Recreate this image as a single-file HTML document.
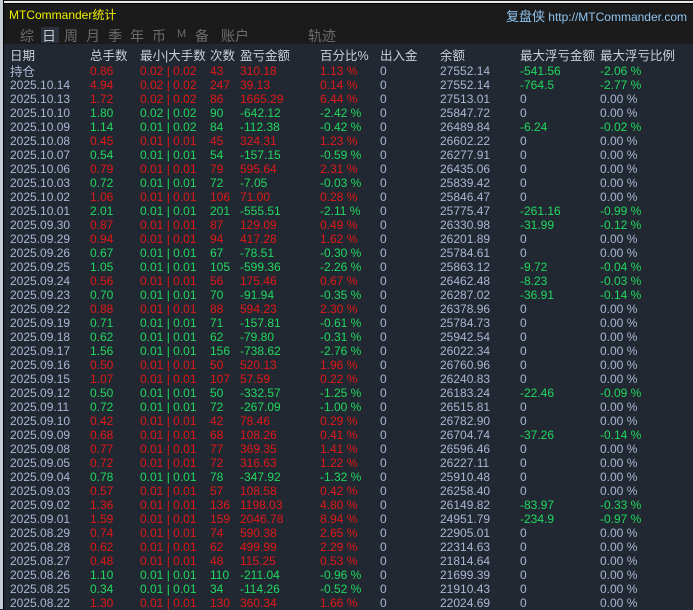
<!DOCTYPE html>
<html><head><meta charset="utf-8"><style>
body{margin:0;width:693px;height:609px;overflow:hidden;background:#222831;position:relative;font-family:"Liberation Sans","Noto Sans CJK SC",sans-serif}
.top{position:absolute;left:0;top:0;width:693px;height:44px;background:#1b1b1b}
.l1{position:absolute;left:0;top:1px;width:693px;height:2px;background:#e8e8e8}
.l2{position:absolute;left:0;top:3px;width:693px;height:1px;background:#000}
.edge{position:absolute;left:0;top:0;width:3px;height:609px;background:#c8ccd4}
.edge2{position:absolute;left:3px;top:0;width:1px;height:609px;background:#000}
.t{position:absolute;white-space:nowrap}
.title{left:9px;top:6px;color:#f0f000;font-size:12px}
.site{right:6px;top:6px;color:#8fc4f0;font-size:12px}
.site b{font-weight:normal;font-size:13px}
.tab{top:26px;color:#6d6d6d;font-size:14px}
.sel{position:absolute;left:41px;top:27px;width:18px;height:16px;background:#2a323e}
.h{top:49px;color:#c9d0dc;font-size:12.5px;line-height:15px}
.r{position:absolute;left:0;width:693px;height:14px;font-size:12px;line-height:14px}
.r span{position:absolute;top:0;white-space:nowrap}
.d{color:#a9b7d4}.R{color:#e01818}.G{color:#20d860}
</style></head><body>
<div class="top"></div><div class="l1"></div><div class="l2"></div>
<div class="edge"></div><div class="edge2"></div>
<div class="t title">MTCommander统计</div>
<div class="t site"><b>复盘侠</b> http://MTCommander.com</div>
<div class="sel"></div>
<div class="t tab" style="left:20px">综</div>
<div class="t tab" style="left:42px;color:#c8c8c8">日</div>
<div class="t tab" style="left:64px">周</div>
<div class="t tab" style="left:86px">月</div>
<div class="t tab" style="left:108px">季</div>
<div class="t tab" style="left:130px">年</div>
<div class="t tab" style="left:152px">币</div>
<div class="t tab" style="left:177px;font-size:11px;top:28px">M</div>
<div class="t tab" style="left:195px">备</div>
<div class="t tab" style="left:221px">账户</div>
<div class="t tab" style="left:308px">轨迹</div>
<div class="t h" style="left:10px">日期</div>
<div class="t h" style="left:90px">总手数</div>
<div class="t h" style="left:140px">最小|大手数</div>
<div class="t h" style="left:210px">次数</div>
<div class="t h" style="left:240px">盈亏金额</div>
<div class="t h" style="left:320px">百分比%</div>
<div class="t h" style="left:380px">出入金</div>
<div class="t h" style="left:440px">余额</div>
<div class="t h" style="left:520px">最大浮亏金额</div>
<div class="t h" style="left:600px">最大浮亏比例</div>
<div id="rows"></div>
<script>
var D=[
["持仓","0.86","0.02 | 0.02","43","310.18","1.13 %","27552.14","-541.56","-2.06 %","R"],
["2025.10.14","4.94","0.02 | 0.02","247","39.13","0.14 %","27552.14","-764.5","-2.77 %","R"],
["2025.10.13","1.72","0.02 | 0.02","86","1665.29","6.44 %","27513.01","","","R"],
["2025.10.10","1.80","0.02 | 0.02","90","-642.12","-2.42 %","25847.72","","","G"],
["2025.10.09","1.14","0.01 | 0.02","84","-112.38","-0.42 %","26489.84","-6.24","-0.02 %","G"],
["2025.10.08","0.45","0.01 | 0.01","45","324.31","1.23 %","26602.22","","","R"],
["2025.10.07","0.54","0.01 | 0.01","54","-157.15","-0.59 %","26277.91","","","G"],
["2025.10.06","0.79","0.01 | 0.01","79","595.64","2.31 %","26435.06","","","R"],
["2025.10.03","0.72","0.01 | 0.01","72","-7.05","-0.03 %","25839.42","","","G"],
["2025.10.02","1.06","0.01 | 0.01","106","71.00","0.28 %","25846.47","","","R"],
["2025.10.01","2.01","0.01 | 0.01","201","-555.51","-2.11 %","25775.47","-261.16","-0.99 %","G"],
["2025.09.30","0.87","0.01 | 0.01","87","129.09","0.49 %","26330.98","-31.99","-0.12 %","R"],
["2025.09.29","0.94","0.01 | 0.01","94","417.28","1.62 %","26201.89","","","R"],
["2025.09.26","0.67","0.01 | 0.01","67","-78.51","-0.30 %","25784.61","","","G"],
["2025.09.25","1.05","0.01 | 0.01","105","-599.36","-2.26 %","25863.12","-9.72","-0.04 %","G"],
["2025.09.24","0.56","0.01 | 0.01","56","175.46","0.67 %","26462.48","-8.23","-0.03 %","R"],
["2025.09.23","0.70","0.01 | 0.01","70","-91.94","-0.35 %","26287.02","-36.91","-0.14 %","G"],
["2025.09.22","0.88","0.01 | 0.01","88","594.23","2.30 %","26378.96","","","R"],
["2025.09.19","0.71","0.01 | 0.01","71","-157.81","-0.61 %","25784.73","","","G"],
["2025.09.18","0.62","0.01 | 0.01","62","-79.80","-0.31 %","25942.54","","","G"],
["2025.09.17","1.56","0.01 | 0.01","156","-738.62","-2.76 %","26022.34","","","G"],
["2025.09.16","0.50","0.01 | 0.01","50","520.13","1.96 %","26760.96","","","R"],
["2025.09.15","1.07","0.01 | 0.01","107","57.59","0.22 %","26240.83","","","R"],
["2025.09.12","0.50","0.01 | 0.01","50","-332.57","-1.25 %","26183.24","-22.46","-0.09 %","G"],
["2025.09.11","0.72","0.01 | 0.01","72","-267.09","-1.00 %","26515.81","","","G"],
["2025.09.10","0.42","0.01 | 0.01","42","78.46","0.29 %","26782.90","","","R"],
["2025.09.09","0.68","0.01 | 0.01","68","108.26","0.41 %","26704.74","-37.26","-0.14 %","R"],
["2025.09.08","0.77","0.01 | 0.01","77","369.35","1.41 %","26596.46","","","R"],
["2025.09.05","0.72","0.01 | 0.01","72","316.63","1.22 %","26227.11","","","R"],
["2025.09.04","0.78","0.01 | 0.01","78","-347.92","-1.32 %","25910.48","","","G"],
["2025.09.03","0.57","0.01 | 0.01","57","108.58","0.42 %","26258.40","","","R"],
["2025.09.02","1.36","0.01 | 0.01","136","1198.03","4.80 %","26149.82","-83.97","-0.33 %","R"],
["2025.09.01","1.59","0.01 | 0.01","159","2046.78","8.94 %","24951.79","-234.9","-0.97 %","R"],
["2025.08.29","0.74","0.01 | 0.01","74","590.38","2.65 %","22905.01","","","R"],
["2025.08.28","0.62","0.01 | 0.01","62","499.99","2.29 %","22314.63","","","R"],
["2025.08.27","0.48","0.01 | 0.01","48","115.25","0.53 %","21814.64","","","R"],
["2025.08.26","1.10","0.01 | 0.01","110","-211.04","-0.96 %","21699.39","","","G"],
["2025.08.25","0.34","0.01 | 0.01","34","-114.26","-0.52 %","21910.43","","","G"],
["2025.08.22","1.30","0.01 | 0.01","130","360.34","1.66 %","22024.69","","","R"]];
var h="";
D.forEach(function(r,i){
var c=r[9],fl=r[7]?"G":"d";
var dt=i==0?'<span class="d" style="left:10px;font-size:12.5px;top:1px">'+r[0]+'</span>':'<span class="d" style="left:10px">'+r[0]+'</span>';
h+='<div class="r" style="top:'+(64+i*14)+'px">'+dt+
'<span class="'+c+'" style="left:90px">'+r[1]+'</span>'+
'<span class="'+c+'" style="left:140px">'+r[2]+'</span>'+
'<span class="'+c+'" style="left:210px">'+r[3]+'</span>'+
'<span class="'+c+'" style="left:240px">'+r[4]+'</span>'+
'<span class="'+c+'" style="left:320px">'+r[5]+'</span>'+
'<span class="d" style="left:380px">0</span>'+
'<span class="d" style="left:440px">'+r[6]+'</span>'+
'<span class="'+fl+'" style="left:520px">'+(r[7]||"0")+'</span>'+
'<span class="'+fl+'" style="left:600px">'+(r[8]||"0.00 %")+'</span></div>';});
document.getElementById("rows").innerHTML=h;
</script>
</body></html>
